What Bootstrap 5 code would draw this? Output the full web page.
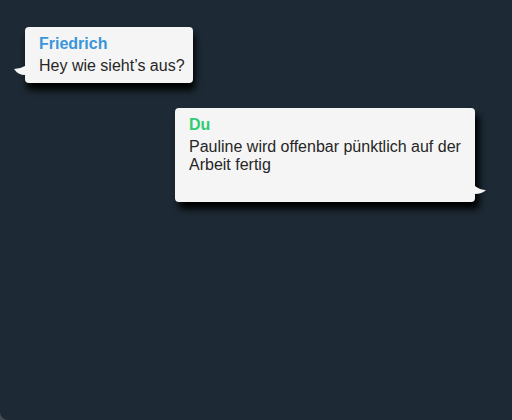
<!DOCTYPE html>
<html lang="de">
<head>
<meta charset="utf-8">
<meta name="viewport" content="width=device-width, initial-scale=1">
<title>Chat</title>
<link href="https://cdn.jsdelivr.net/npm/bootstrap@5.3.0/dist/css/bootstrap.min.css" rel="stylesheet">
<style>
body { background: #464c54; font: 16px/18px "Liberation Sans", Arial, sans-serif; }
.chat { background: #1d2934; border-bottom-left-radius: 8px; padding: 27px 37px 27px 25px; gap: 25px; }
.bubble { background: #f5f5f5; color: #262626; border-radius: 4px; padding: 8px 8px 8px 14px; max-width: 300px; box-shadow: 2px 7px 7px #000; }
.bubble-own { padding-bottom: 28px; box-shadow: 4px 7px 7px #000; }
.sender { font-size: 16px; line-height: 18px; margin-bottom: 4px; }
.sender-friend { color: #3b95d9; }
.sender-own { color: #2ecc71; }
.tail { width: 12px; height: 10px; bottom: 7px; right: 100%; fill: #f5f5f5; }
.tail-own { right: auto; left: 100%; }
</style>
<script src="https://cdn.jsdelivr.net/npm/bootstrap@5.3.0/dist/js/bootstrap.bundle.min.js"></script>
</head>
<body>
<main class="chat d-flex flex-column min-vh-100">
  <article class="bubble position-relative align-self-start">
    <h2 class="sender sender-friend fw-bold">Friedrich</h2>
    <p class="mb-0">Hey wie sieht’s aus?</p>
    <svg class="tail position-absolute" viewBox="0 0 12 10" aria-hidden="true"><path d="M12 0Q7 3 1 3Q5 9 12 9Z"/></svg>
  </article>
  <article class="bubble bubble-own position-relative align-self-end">
    <h2 class="sender sender-own fw-bold">Du</h2>
    <p class="mb-0">Pauline wird offenbar pünktlich auf der Arbeit fertig</p>
    <svg class="tail tail-own position-absolute" viewBox="0 0 12 10" aria-hidden="true"><path d="M0 1Q5 5 11 5Q7 9 0 9Z"/></svg>
  </article>
</main>
</body>
</html>
